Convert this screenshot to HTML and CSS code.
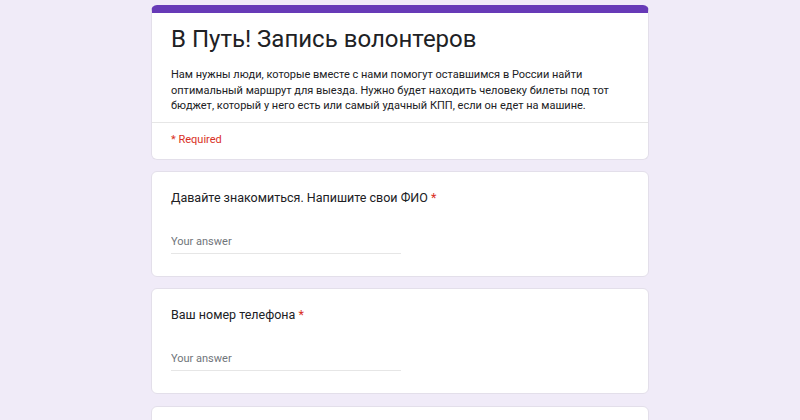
FILE: index.html
```html
<!DOCTYPE html>
<html>
<head>
<meta charset="UTF-8">
<title>В Путь! Запись волонтеров</title>
<link rel="stylesheet" href="styles.css">
</head>
<body>

<div class="form">
	<div class="card card-header">
		<div class="header-top">
			<h1 class="form-title">В Путь! Запись волонтеров</h1>
			<p class="form-desc">Нам нужны люди, которые вместе с нами помогут оставшимся в России найти оптимальный маршрут для выезда. Нужно будет находить человеку билеты под тот бюджет, который у него есть или самый удачный КПП, если он едет на машине.</p>
		</div>
		<div class="required-note">* Required</div>
	</div>

	<div class="card question">
		<div class="question-title">Давайте знакомиться. Напишите свои ФИО <span class="star">*</span></div>
		<input type="text" class="answer" placeholder="Your answer">
	</div>

	<div class="card question">
		<div class="question-title">Ваш номер телефона <span class="star">*</span></div>
		<input type="text" class="answer" placeholder="Your answer">
	</div>

	<div class="card question question-next"></div>
</div>

</body>
</html>
```

FILE: styles.css
```css
body {
	margin: 0;
	background: #f0ebf8;
	font-family: Roboto, "Noto Sans", Arial, sans-serif;
	color: #202124;
}

.form {
	width: 498px;
	margin: 0 auto;
	padding-top: 5px;
	display: flex;
	flex-direction: column;
	gap: 11px;
}

.card {
	background: #fff;
	border: 1px solid #e3dfea;
	border-radius: 6px;
	box-sizing: border-box;
}

.card-header {
	border-top: 8px solid #673ab7;
}

.header-top {
	padding: 11px 19px 8px 19px;
	border-bottom: 1px solid #e6e6e6;
}

.form-title {
	margin: 0;
	font-size: 24px;
	line-height: 30px;
	font-weight: 400;
}

.form-desc {
	margin: 13px 0 0 0;
	font-size: 11px;
	line-height: 15.5px;
}

.required-note {
	padding: 9px 19px 11px 19px;
	font-size: 11px;
	line-height: 16px;
	color: #d93025;
}

.question {
	padding: 17px 19px 22px 19px;
	display: flex;
	flex-direction: column;
	align-items: flex-start;
}

.question-next {
	height: 100px;
	margin-top: 1px;
}

.question-title {
	font-size: 12.5px;
	line-height: 18px;
}

.star {
	color: #d93025;
}

.answer {
	margin-top: 27px;
	width: 230px;
	border: none;
	border-bottom: 1px solid #e6e6e6;
	padding: 0 0 3px 0;
	font-family: inherit;
	font-size: 11px;
	line-height: 16px;
	outline: none;
	background: transparent;
}

.answer::placeholder {
	color: #70757a;
}
```
